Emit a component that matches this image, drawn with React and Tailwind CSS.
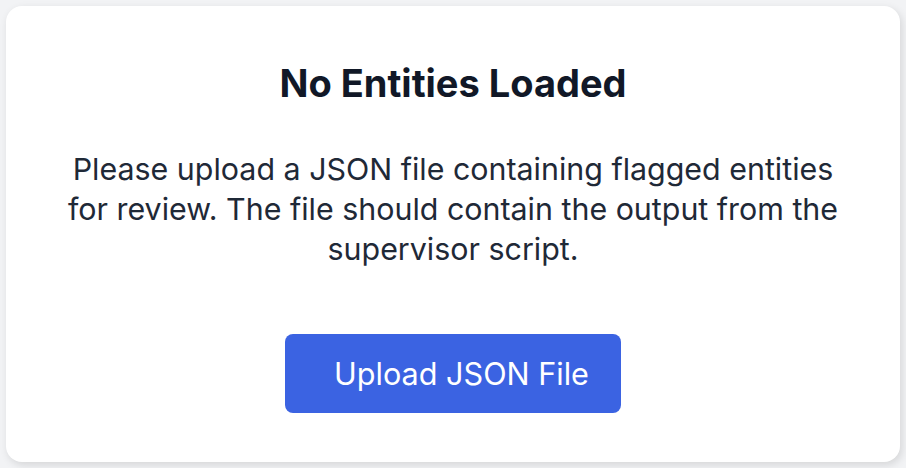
import React from 'react';

export default function App() {
  return (
    <div className="min-h-screen w-full bg-[#f2f3f5] p-[6px]" style={{ fontFamily: 'Inter, "Noto Sans", sans-serif' }}>
      <div className="flex h-[456px] flex-col items-center rounded-[16px] bg-white px-[53px] pt-[54px] shadow-[2px_3px_8px_rgba(0,0,0,0.12)]">
        <h2 className="text-[38px] font-bold leading-[47px] text-[#111827]">No Entities Loaded</h2>
        <p className="mt-[42px] max-w-[792px] text-center text-[30.4px] leading-[40px] text-[#1f2937]">
          Please upload a JSON file containing flagged entities for review. The file should contain the output from the supervisor script.
        </p>
        <button className="mt-[65px] flex h-[79px] items-center rounded-[8px] bg-[#3b63e2] pl-[49px] pr-[32px] text-[30.6px] text-white">
          Upload JSON File
        </button>
      </div>
    </div>
  );
}
